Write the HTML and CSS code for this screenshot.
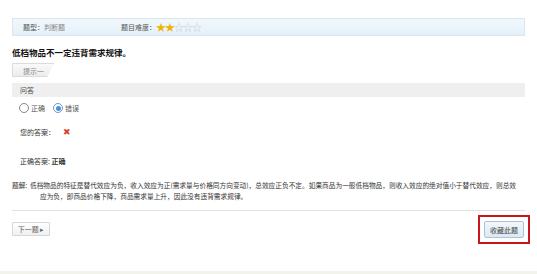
FILE: index.html
```html
<!DOCTYPE html>
<html lang="zh-CN">

<head>
    <meta charset="UTF-8">
    <meta name="viewport" content="width=device-width, initial-scale=1.0">
    <title>题目</title>
    <link rel="stylesheet" href="styles.css">
</head>

<body>
    <div class="wrapper">
        <section class="infoBar">
            <div class="infoItem">题型：<span class="infoValue">判断题</span></div>
            <div class="infoItem">题目难度：
                <span class="stars">
                    <span class="star on">★</span><span class="star on">★</span><span class="star">☆</span><span class="star">☆</span><span class="star">☆</span>
                </span>
            </div>
        </section>

        <h1 class="question">低档物品不一定违背需求规律。</h1>

        <div class="tabArea">
            <div class="tab">提示一</div>
        </div>

        <div class="sectionHead">问答</div>

        <div class="options">
            <label class="option"><span class="radio"></span>正确</label>
            <label class="option"><span class="radio checked"></span>错误</label>
        </div>

        <div class="answerRow">您的答案：<span class="wrong">✖</span></div>

        <div class="answerRow right">正确答案: <b>正确</b></div>

        <p class="explain"><span class="explainLabel">题解:</span>低档物品的特征是替代效应为负，收入效应为正(需求量与价格同方向变动)，总效应正负不定。如果商品为一般低档物品，则收入效应的绝对值小于替代效应，则总效应为负，即商品价格下降，商品需求量上升，因此没有违背需求规律。</p>

        <div class="footer">
            <button class="btn">下一题 ▸</button>
            <div class="markBox">
                <button class="btn blue">收藏此题</button>
            </div>
        </div>
    </div>
    <div class="bottomLine"></div>
</body>

</html>
```

FILE: styles.css
```css
* {
    margin: 0;
    padding: 0;
    box-sizing: border-box;
}

body {
    font-family: "Noto Sans CJK SC", "Liberation Sans", sans-serif;
    font-size: 7px;
    color: #333;
    background: #fff;
    width: 537px;
    height: 274px;
    overflow: hidden;
    position: relative;
}

.wrapper {
    padding: 18px 12px 0 12px;
}

.infoBar {
    height: 18px;
    display: flex;
    align-items: center;
    padding-left: 10px;
    background: linear-gradient(#f1f8fd, #e4f0f9);
    border: 1px solid #d9e6ef;
    color: #555;
}

.infoItem {
    width: 98px;
    display: flex;
    align-items: center;
}

.infoValue {
    color: #888;
}

.stars {
    display: flex;
}

.star {
    font-size: 10px;
    color: #d0d0d0;
    width: 9px;
    line-height: 10px;
}

.star.on {
    color: #f0b400;
}

.question {
    font-size: 8.5px;
    font-weight: bold;
    color: #111;
    margin-top: 10px;
    line-height: 12px;
}

.tabArea {
    margin-top: 5px;
    height: 15px;
}

.tab {
    width: 42px;
    height: 14px;
    line-height: 14px;
    padding-left: 10px;
    color: #888;
    background: linear-gradient(#fafafa, #ececec);
    border: 1px solid #dcdcdc;
    border-right: none;
    clip-path: polygon(0 0, 100% 0, 84% 100%, 0 100%);
}

.sectionHead {
    margin-top: 5px;
    height: 14px;
    line-height: 14px;
    padding-left: 8px;
    background: #efefef;
    color: #444;
}

.options {
    display: flex;
    gap: 8px;
    margin-top: 4px;
    padding-left: 7px;
    height: 14px;
    align-items: center;
}

.option {
    display: flex;
    align-items: center;
    gap: 2px;
    color: #555;
}

.radio {
    width: 10px;
    height: 10px;
    border: 1px solid #888;
    border-radius: 50%;
    background: #fff;
    display: flex;
    align-items: center;
    justify-content: center;
}

.radio.checked {
    border-color: #6a9bc8;
}

.radio.checked::after {
    content: "";
    width: 5px;
    height: 5px;
    border-radius: 50%;
    background: #4a90d9;
}

.answerRow {
    margin-top: 10px;
    padding-left: 8px;
    height: 14px;
    line-height: 14px;
    color: #333;
}

.answerRow.right {
    margin-top: 15px;
}

.wrong {
    color: #d9442c;
    font-size: 9px;
    margin-left: 8px;
}

.explain {
    margin-top: 12px;
    font-size: 6.7px;
    line-height: 11px;
    padding-left: 28px;
    padding-right: 6px;
    color: #333;
}

.explainLabel {
    display: inline-block;
    width: 18px;
    margin-left: -28px;
}

.footer {
    margin-top: 8px;
    border-top: 1px solid #e3e3e3;
    display: flex;
    justify-content: space-between;
    align-items: flex-start;
    padding-top: 4px;
}

.btn {
    font-family: inherit;
    font-size: 7px;
    color: #666;
    height: 14px;
    width: 38px;
    margin-top: 7px;
    border: 1px solid #d6d6d6;
    background: linear-gradient(#fff, #f0f0f0);
    border-radius: 1px;
}

.btn.blue {
    margin-top: 0;
    height: 17px;
    width: 40px;
    border-color: #a9c4d8;
    background: linear-gradient(#f2f8fc, #dce9f3);
    color: #444;
    border-radius: 2px;
}

.markBox {
    margin-right: -5px;
    border: 2px solid #c8161d;
    padding: 4px;
}

.bottomLine {
    position: absolute;
    left: 0;
    right: 0;
    bottom: 0;
    height: 3px;
    background: #f2f3ea;
}
```
